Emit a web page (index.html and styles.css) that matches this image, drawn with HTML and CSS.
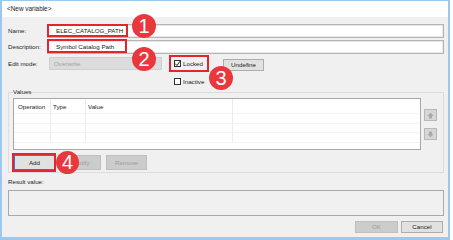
FILE: index.html
```html
<!DOCTYPE html>
<html lang="en">
<head>
<meta charset="utf-8">
<title>New variable</title>
<link rel="stylesheet" href="styles.css">
</head>
<body>
<div class="window">
  <div class="titlebar">&lt;New variable&gt;</div>
  <div class="content">
    <div class="form">
      <span class="lbl">Name:</span>
      <div class="input">ELEC_CATALOG_PATH</div>
      <span class="lbl">Description:</span>
      <div class="input">Symbol Catalog Path</div>
      <span class="lbl lbl-edit">Edit mode:</span>
      <div class="edit-row">
        <div class="select">
          <span>Overwrite</span>
          <svg class="caret" width="7" height="4" viewBox="0 0 7 4"><path d="M0.5 0.5 L3.5 3.5 L6.5 0.5" fill="none" stroke="#b8b8b8" stroke-width="1"/></svg>
        </div>
        <div class="checks">
          <div class="check">
            <span class="box"><svg width="7" height="7" viewBox="0 0 7 7"><path d="M1 3.5 L3 5.5 L6 1.2" fill="none" stroke="#222" stroke-width="1"/></svg></span>
            <span>Locked</span>
          </div>
          <div class="check">
            <span class="box"></span>
            <span>Inactive</span>
          </div>
        </div>
        <div class="btn btn-undefine">Undefine</div>
      </div>
    </div>

    <fieldset class="group">
      <legend>Values</legend>
      <div class="values-body">
        <div class="list">
          <div class="row head"><span class="cell">Operation</span><span class="cell">Type</span><span class="cell">Value</span><span class="cell"></span></div>
          <div class="row"><span class="cell"></span><span class="cell"></span><span class="cell"></span><span class="cell"></span></div>
          <div class="row"><span class="cell"></span><span class="cell"></span><span class="cell"></span><span class="cell"></span></div>
          <div class="row"><span class="cell"></span><span class="cell"></span><span class="cell"></span><span class="cell"></span></div>
        </div>
        <div class="updown">
          <div class="arrow-btn"><svg width="7" height="7" viewBox="0 0 7 7"><path d="M3.5 0.5 L6.5 4 L5 4 L5 6.5 L2 6.5 L2 4 L0.5 4 Z" fill="#a9a9a9"/></svg></div>
          <div class="arrow-btn"><svg width="7" height="7" viewBox="0 0 7 7"><path d="M3.5 6.5 L6.5 3 L5 3 L5 0.5 L2 0.5 L2 3 L0.5 3 Z" fill="#a9a9a9"/></svg></div>
        </div>
      </div>
      <div class="actions">
        <div class="btn btn-focus">Add</div>
        <div class="btn btn-disabled">Modify</div>
        <div class="btn btn-disabled">Remove</div>
      </div>
    </fieldset>

    <div class="result-label">Result value:</div>
    <div class="result"></div>
    <div class="footer">
      <div class="btn btn-disabled btn-ok">OK</div>
      <div class="btn btn-cancel">Cancel</div>
    </div>
  </div>
</div>

<div class="mark mark-name"></div>
<div class="mark mark-desc"></div>
<div class="mark mark-locked"></div>
<div class="mark mark-add"></div>
<div class="step step-1">1</div>
<div class="step step-2">2</div>
<div class="step step-3">3</div>
<div class="step step-4">4</div>
</body>
</html>
```

FILE: styles.css
```css
* { box-sizing: border-box; }

html, body {
  margin: 0;
  padding: 0;
  background: #ffffff;
}

body {
  position: relative;
  width: 453px;
  height: 240px;
  overflow: hidden;
  font-family: "Liberation Sans", Arial, sans-serif;
  font-size: 6.2px;
  color: #1a1a1a;
}

.window {
  width: 450px;
  height: 240px;
  border-style: solid;
  border-color: #9cc8ee;
  border-width: 1px 2px 3px 2px;
  display: flex;
  flex-direction: column;
}

.titlebar {
  height: 16px;
  line-height: 16px;
  padding-left: 5px;
  background: #ffffff;
  font-size: 6.4px;
}

.content {
  flex: 1;
  background: #f0f0f0;
  padding: 7px 4px 0 6px;
  display: flex;
  flex-direction: column;
}

.form {
  display: grid;
  grid-template-columns: 39px 1fr;
  row-gap: 2px;
}

.lbl {
  line-height: 14px;
  white-space: nowrap;
}

.lbl-edit {
  margin-top: 1px;
  line-height: 13px;
}

.input {
  height: 14px;
  line-height: 12px;
  padding-left: 8px;
  background: #ffffff;
  border: 1px solid #b4b4b4;
  box-shadow: inset 0 0 0 1px #e8e8e8;
}

.edit-row {
  margin-top: 1px;
  display: flex;
  align-items: flex-start;
}

.select {
  margin-left: 2px;
  width: 113px;
  height: 13px;
  padding: 0 4px 0 4px;
  display: flex;
  align-items: center;
  justify-content: space-between;
  background: #dcdcdc;
  border: 1px solid #cfcfcf;
  color: #a2a2a2;
}

.checks {
  margin-left: 12px;
  width: 49px;
  display: flex;
  flex-direction: column;
  gap: 5px;
}

.check {
  height: 13px;
  display: flex;
  align-items: center;
  gap: 2px;
}

.box {
  width: 7px;
  height: 7px;
  border: 1px solid #333333;
  background: #ffffff;
  display: flex;
  align-items: center;
  justify-content: center;
}

.box svg { display: block; flex: none; }

.btn {
  height: 12px;
  line-height: 10px;
  text-align: center;
  background: #e1e1e1;
  border: 1px solid #adadad;
  color: #1a1a1a;
}

.btn-undefine {
  margin-top: 2px;
  width: 41px;
}

.btn-disabled {
  background: #cccccc;
  border-color: #bfbfbf;
  color: #9d9d9d;
}

.btn-focus {
  border-color: #2a7fd4;
}

.group {
  margin: 0;
  padding: 2px 5px 2px 4px;
  border: 1px solid #dcdcdc;
  min-inline-size: 0;
}

.group legend {
  padding: 0;
  line-height: 8px;
  margin-left: 0;
}

.values-body {
  display: flex;
  align-items: flex-start;
}

.list {
  width: 408px;
  height: 52px;
  background: #ffffff;
  border: 1px solid #a8a8a8;
}

.row {
  display: grid;
  grid-template-columns: 37px 35px 147px 1fr;
  height: 9.5px;
  border-bottom: 1px solid #f2f2f2;
}

.row.head {
  height: 15px;
  border-bottom: 1px solid #f4f4f4;
}

.cell {
  border-right: 1px solid #ececec;
  padding-left: 2px;
  line-height: 15px;
  white-space: nowrap;
}

.cell:first-child { padding-left: 4px; }
.cell:last-child { border-right: none; }

.updown {
  margin-left: 3px;
  margin-top: 11px;
  display: flex;
  flex-direction: column;
  gap: 7px;
}

.arrow-btn {
  width: 13px;
  height: 12px;
  background: #d6d6d6;
  border: 1px solid #b8b8b8;
  display: flex;
  align-items: center;
  justify-content: center;
}

.actions {
  margin-top: 5px;
  margin-left: 1px;
  display: flex;
  gap: 5px;
}

.actions .btn {
  width: 41px;
  height: 15px;
  line-height: 13px;
}

.result-label {
  margin-top: 5px;
  line-height: 8px;
}

.result {
  margin-top: 4px;
  height: 26px;
  border: 1px solid #a9a9a9;
  background: #f0f0f0;
}

.footer {
  margin-top: 5px;
  margin-right: 1px;
  display: flex;
  justify-content: flex-end;
  gap: 3px;
}

.btn-ok { width: 43px; }
.btn-cancel { width: 42px; }

/* annotations */
.mark {
  position: absolute;
  border: 2px solid #e3262d;
}

.mark-name { left: 47px; top: 24px; width: 81px; height: 13px; }
.mark-desc { left: 47px; top: 39px; width: 80px; height: 14px; }
.mark-locked { left: 169px; top: 55px; width: 40px; height: 17px; }
.mark-add { left: 12px; top: 153px; width: 44px; height: 19px; }

.step {
  position: absolute;
  width: 24px;
  height: 24px;
  border-radius: 50%;
  background: #e8383d;
  color: #ffffff;
  font-family: "Liberation Sans", Arial, sans-serif;
  font-size: 20px;
  line-height: 24px;
  text-align: center;
}

.step-1 { left: 132px; top: 14px; }
.step-2 { left: 132px; top: 47px; }
.step-3 { left: 209px; top: 66px; }
.step-4 { left: 56px; top: 151px; width: 23px; height: 23px; line-height: 23px; }
```
